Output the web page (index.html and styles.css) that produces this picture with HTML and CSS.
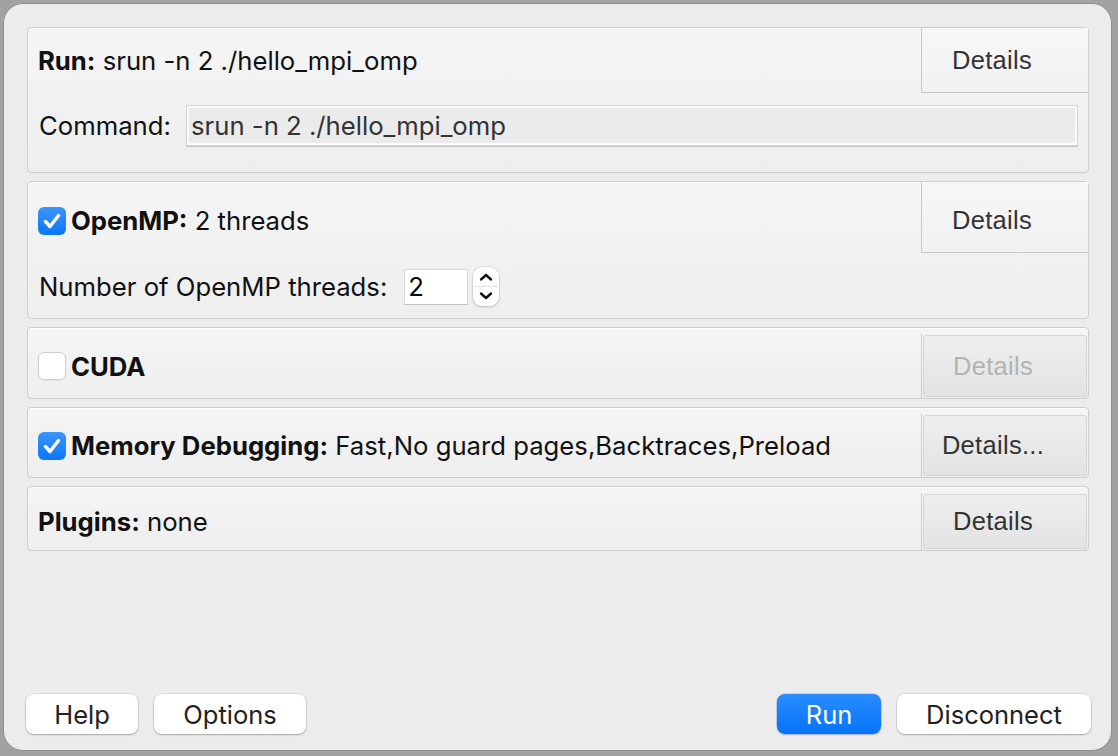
FILE: index.html
```html
<!DOCTYPE html>
<html>
<head>
<meta charset="utf-8">
<link rel="stylesheet" href="styles.css">
</head>
<body>
<div class="window">
  <div class="panels">
    <section class="panel">
      <div class="head head-top h65">
        <div class="label"><b>Run:</b>&nbsp;srun -n 2 ./hello_mpi_omp</div>
        <div class="details-top">Details</div>
      </div>
      <div class="body body-cmd">
        <span class="field-label">Command:</span>
        <div class="cmd-input">srun -n 2 ./hello_mpi_omp</div>
      </div>
    </section>

    <section class="panel">
      <div class="head head-top h71">
        <div class="label label-shift">
          <span class="check on"><svg viewBox="0 0 28 28" width="28" height="28"><path d="M7.5 14.5 L12 19.5 L20.5 8.5" fill="none" stroke="#fff" stroke-width="3.4" stroke-linecap="round" stroke-linejoin="round"/></svg></span>
          <b>OpenMP:</b>&nbsp;2 threads
        </div>
        <div class="details-top shift">Details</div>
      </div>
      <div class="body body-omp">
        <span class="field-label">Number of OpenMP threads:</span>
        <div class="spin-input">2</div>
        <div class="spinner">
          <svg viewBox="0 0 26 39" width="26" height="39">
            <path d="M8 12.5 L13 8 L18 12.5" fill="none" stroke="#111" stroke-width="2.4" stroke-linecap="round" stroke-linejoin="round"/>
            <line x1="1" y1="19.5" x2="25" y2="19.5" stroke="#e2e2e2" stroke-width="1"/>
            <path d="M8 26.5 L13 31 L18 26.5" fill="none" stroke="#111" stroke-width="2.4" stroke-linecap="round" stroke-linejoin="round"/>
          </svg>
        </div>
      </div>
    </section>

    <section class="panel">
      <div class="head head-inset h70">
        <div class="label">
          <span class="check off"></span>
          <b>CUDA</b>
        </div>
        <div class="details-col"><div class="details-btn disabled">Details</div></div>
      </div>
    </section>

    <section class="panel">
      <div class="head head-inset h69">
        <div class="label">
          <span class="check on"><svg viewBox="0 0 28 28" width="28" height="28"><path d="M7.5 14.5 L12 19.5 L20.5 8.5" fill="none" stroke="#fff" stroke-width="3.4" stroke-linecap="round" stroke-linejoin="round"/></svg></span>
          <b>Memory Debugging:</b>&nbsp;Fast,No guard pages,Backtraces,Preload
        </div>
        <div class="details-col"><div class="details-btn">Details...</div></div>
      </div>
    </section>

    <section class="panel">
      <div class="head head-inset h63">
        <div class="label"><b>Plugins:</b>&nbsp;none</div>
        <div class="details-col"><div class="details-btn">Details</div></div>
      </div>
    </section>
  </div>

  <div class="buttons">
    <div class="group">
      <div class="btn w-help">Help</div>
      <div class="btn w-options">Options</div>
    </div>
    <div class="group">
      <div class="btn primary w-run">Run</div>
      <div class="btn w-disc">Disconnect</div>
    </div>
  </div>
</div>
</body>
</html>
```

FILE: styles.css
```css
* { box-sizing: border-box; }
html, body {
  margin: 0;
  padding: 0;
  width: 1118px;
  height: 756px;
  background: #a2a2a2;
  overflow: hidden;
}
body {
  font-family: "Inter", "Noto Sans", sans-serif;
  font-size: 25.7px;
  color: #111;
  padding: 3px 6px 5px 3px;
}
.window {
  width: 1109px;
  height: 748px;
  background: #ececec;
  border: 1px solid #8f8f8f;
  border-radius: 20px;
  display: flex;
  flex-direction: column;
  justify-content: space-between;
  padding: 23px 22px 16px 22px;
}
.panels {
  display: flex;
  flex-direction: column;
  gap: 8px;
  width: 1062px;
  margin-left: 1px;
}
.panel {
  border: 1px solid #cdcdcd;
  border-radius: 4px;
  background: linear-gradient(#f5f5f5, #eeeeee);
  box-shadow: inset 0 1px 0 #fbfbfb;
}
.head {
  display: flex;
  align-items: stretch;
}
.h65 { height: 65px; }
.h71 { height: 71px; }
.h70 { height: 70px; }
.h69 { height: 69px; }
.h63 { height: 63px; }

.label {
  flex: 1;
  display: flex;
  align-items: center;
  padding-left: 10px;
  white-space: nowrap;
}
.label b { font-weight: 700; }
.label-shift { padding-top: 6px; }
.head-top .label { padding-left: 10px; }
.head-inset { padding-top: 6px; }

.details-top {
  width: 167px;
  border-left: 1px solid #c9c9c9;
  border-bottom: 1px solid #c6c6c6;
  background: linear-gradient(#f7f7f7, #f1f1f1);
  display: flex;
  align-items: center;
  justify-content: center;
  padding-right: 26px;
  color: #333;
  font-family: "Liberation Sans", "Arial", sans-serif;
  font-size: 25.5px;
  letter-spacing: 0.3px;
}
.details-top.shift { padding-top: 7px; }
.details-col {
  width: 167px;
  border-left: 1px solid #cfcfcf;
  padding: 1px 1px 1px 1px;
  display: flex;
}
.details-btn {
  flex: 1;
  border: 1px solid #d6d6d6;
  border-radius: 3px;
  background: linear-gradient(#eeeeee, #e3e3e3);
  display: flex;
  align-items: center;
  justify-content: center;
  padding-right: 24px;
  color: #333;
  font-family: "Liberation Sans", "Arial", sans-serif;
  font-size: 25.5px;
  letter-spacing: 0.3px;
}
.details-btn.disabled { color: #b3b3b3; }

.check {
  width: 28px;
  height: 28px;
  border-radius: 6px;
  margin-right: 5px;
  display: inline-flex;
  flex-shrink: 0;
}
.check.on {
  background: linear-gradient(#3d95fd, #0b76f7);
}
.check.off {
  background: #fff;
  border: 1px solid #cfcfcf;
  box-shadow: 0 1px 1px rgba(0,0,0,0.06);
}

.body {
  display: flex;
  align-items: center;
  padding-left: 11px;
}
.body-cmd {
  padding-top: 13px;
  padding-bottom: 27px;
  padding-right: 11px;
}
.field-label { white-space: nowrap; }
.cmd-input {
  margin-left: auto;
  width: 890px;
  height: 39px;
  background: #ebebeb;
  border: 2px solid #fbfbfb;
  box-shadow: 0 0 0 1px #d4d4d4, 0 1px 0 1px #c4c4c4;
  display: flex;
  align-items: center;
  padding-left: 2px;
  color: #333;
}
.body-omp {
  padding-top: 14px;
  padding-bottom: 12px;
}
.spin-input {
  margin-left: 17px;
  width: 64px;
  height: 36px;
  background: #fff;
  border: 1px solid #d8d8d8;
  border-bottom-color: #c2c2c2;
  display: flex;
  align-items: center;
  padding-left: 3px;
  color: #000;
}
.spinner {
  margin-left: 5px;
  width: 26px;
  height: 39px;
  background: #fff;
  border-radius: 9px;
  box-shadow: 0 0 0 0.5px #c8c8c8, 0 1px 2px rgba(0,0,0,0.22);
  display: flex;
}

.buttons {
  display: flex;
  justify-content: space-between;
  align-items: center;
  width: 1065px;
}
.group {
  display: flex;
  gap: 16px;
}
.btn {
  height: 40px;
  border-radius: 8px;
  background: #fff;
  box-shadow: 0 0 0 0.5px rgba(0,0,0,0.12), 0 1px 2px rgba(0,0,0,0.25);
  display: flex;
  align-items: center;
  justify-content: center;
  color: #222;
  font-size: 25.5px;
}
.btn.primary {
  background: linear-gradient(#2a8dff, #0474f6);
  color: #fff;
  box-shadow: 0 0 0 0.5px rgba(0,80,200,0.3), 0 1px 2px rgba(0,0,0,0.2);
}
.w-help { width: 112px; }
.w-options { width: 152px; }
.w-run { width: 104px; }
.w-disc { width: 194px; }
```
